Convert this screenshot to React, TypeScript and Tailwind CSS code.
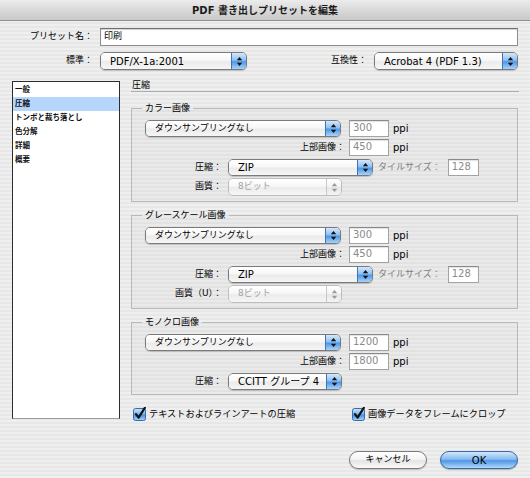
import React from "react";

const ROOT_FONT = "font-[family-name:'DejaVu_Sans','Noto_Sans_CJK_JP',sans-serif]";

function Arrows({ disabled }: { disabled?: boolean }) {
  const c = disabled ? "#9a9a9a" : "#111";
  return (
    <svg width="7" height="11" viewBox="0 0 7 11">
      <path d="M0.8 4.3 L3.5 1 L6.2 4.3 Z" fill={c} />
      <path d="M0.8 6.7 L3.5 10 L6.2 6.7 Z" fill={c} />
    </svg>
  );
}

function Popup({
  className,
  label,
  disabled,
  textClass,
}: {
  className: string;
  label: string;
  disabled?: boolean;
  textClass: string;
}) {
  return (
    <div
      className={`flex shrink-0 items-stretch overflow-hidden rounded-[5px] border ${
        disabled ? "border-[#bdbdbd]" : "border-[#7a7a7a] shadow-[0_1px_1px_rgba(0,0,0,0.18)]"
      } ${className}`}
    >
      <div
        className={`flex flex-1 items-center pl-[9px] bg-[linear-gradient(180deg,#ffffff_0%,#f7f7f7_45%,#ebebeb_55%,#f6f6f6_100%)] ${
          disabled ? "text-[#a0a0a0]" : "text-black"
        } ${textClass}`}
      >
        {label}
      </div>
      <div
        className={`flex w-[15px] items-center justify-center border-l ${
          disabled
            ? "border-[#c8c8c8] bg-[linear-gradient(180deg,#ffffff_0%,#f4f4f4_50%,#e6e6e6_51%,#f4f4f4_100%)]"
            : "border-[#3f74b8] bg-[linear-gradient(180deg,#d6e8fb_0%,#8ec0f2_45%,#4d98e6_55%,#a8d3fa_100%)]"
        }`}
      >
        <Arrows disabled={disabled} />
      </div>
    </div>
  );
}

function Field({ className, value, dark }: { className: string; value: string; dark?: boolean }) {
  return (
    <div
      className={`flex h-[17px] shrink-0 items-start border border-[#a3a3a3] border-t-[#8a8a8a] bg-white pl-[3px] text-[10px] leading-[14px] shadow-[inset_0_1px_1px_rgba(0,0,0,0.12)] ${
        dark ? "text-black" : "text-[#8a8a8a]"
      } ${className}`}
    >
      {value}
    </div>
  );
}

function Check() {
  return (
    <svg width="14" height="14" viewBox="0 0 14 14" className="shrink-0">
      <defs>
        <linearGradient id="cb" x1="0" y1="0" x2="0" y2="1">
          <stop offset="0" stopColor="#cfe5fb" />
          <stop offset="0.45" stopColor="#7db6ef" />
          <stop offset="0.55" stopColor="#4a93e2" />
          <stop offset="1" stopColor="#a8d4fa" />
        </linearGradient>
      </defs>
      <rect x="0.5" y="1.5" width="12" height="12" rx="2" fill="url(#cb)" stroke="#3a6aa8" />
      <path d="M3 7.2 L5.6 10.6 L11.8 0.8" fill="none" stroke="#111" strokeWidth="2.2" strokeLinecap="round" strokeLinejoin="round" />
    </svg>
  );
}

function Label({ className, children }: { className: string; children: React.ReactNode }) {
  return <span className={`shrink-0 text-right text-[9px] ${className}`}>{children}</span>;
}

export default function App() {
  return (
    <div
      className={`${ROOT_FONT} flex h-[478px] w-[530px] flex-col overflow-hidden bg-[repeating-linear-gradient(180deg,#efefef_0px,#efefef_2px,#e7e7e7_2px,#e7e7e7_4px)] text-black`}
    >
      {/* title bar */}
      <div className="flex h-[21px] shrink-0 items-center justify-center border-b border-[#909090] bg-[linear-gradient(180deg,#ececec_0%,#d9d9d9_50%,#c9c9c9_100%)] text-[10px] font-bold text-[#1c1c1c]">
        PDF 書き出しプリセットを編集
      </div>

      {/* preset name */}
      <div className="mt-[7px] flex h-[18px] items-center">
        <Label className="w-[93px]">プリセット名：</Label>
        <div className="ml-[7px] mr-[12px] flex h-[18px] flex-1 items-center border border-[#8e8e8e] border-t-[#6f6f6f] bg-white pl-[3px] text-[9px] shadow-[inset_0_1px_1px_rgba(0,0,0,0.18)]">
          印刷
        </div>
      </div>

      {/* standard / compatibility */}
      <div className="mt-[6px] flex h-[18px] items-center">
        <Label className="w-[93px]">標準：</Label>
        <Popup className="ml-[7px] h-[18px] w-[147px]" label="PDF/X-1a:2001" textClass="text-[10px]" />
        <Label className="flex-1 pr-[7px]">互換性：</Label>
        <Popup className="mr-[12px] h-[18px] w-[144px]" label="Acrobat 4 (PDF 1.3)" textClass="text-[10px]" />
      </div>

      {/* lower area */}
      <div className="mt-[11px] flex">
        {/* side list */}
        <div className="ml-[12px] flex h-[338px] w-[108px] shrink-0 flex-col border border-[#2c2c2c] border-b-[#9a9a9a] bg-white pt-[1px]">
          {["一般", "圧縮", "トンボと裁ち落とし", "色分解", "詳細", "概要"].map((t, i) => (
            <div
              key={t}
              className={`flex h-[14px] items-center pl-[2px] text-[7.5px] font-semibold text-[#111] ${
                i === 1 ? "bg-[#b7d6fb]" : ""
              }`}
            >
              {t}
            </div>
          ))}
        </div>

        {/* right panel */}
        <div className="ml-[11px] flex w-[388px] flex-col">
          <div className="h-[11px] border-b border-[#ababab] pl-[1px] text-[9px] leading-[9px]">圧縮</div>

          {/* color images */}
          <fieldset className="mt-[10px] mr-[1px] border border-[#b9b9b9] bg-black/[0.02] pb-[5px] pt-[6px]">
            <legend className="ml-[10px] px-[3px] text-[9px] leading-[12px]">カラー画像</legend>
            <div className="flex h-[17px] items-center">
              <Popup className="ml-[13px] h-[17px] w-[196px]" label="ダウンサンプリングなし" textClass="text-[9px]" />
              <Field className="ml-[8px] w-[40px]" value="300" />
              <span className="ml-[4px] text-[10px]">ppi</span>
            </div>
            <div className="mt-[2px] flex h-[17px] items-center">
              <Label className="w-[213px]">上部画像：</Label>
              <Field className="ml-[4px] w-[40px]" value="450" />
              <span className="ml-[4px] text-[10px]">ppi</span>
            </div>
            <div className="mt-[3px] flex h-[17px] items-center">
              <Label className="w-[90px]">圧縮：</Label>
              <Popup className="ml-[6px] h-[17px] w-[145px]" label="ZIP" textClass="text-[10px]" />
              <span className="ml-[5px] text-[9px] text-[#7d7d7d]">タイルサイズ：</span>
              <Field className="ml-[7px] w-[31px]" value="128" />
            </div>
            <div className="mt-[2px] flex h-[18px] items-center">
              <Label className="w-[90px]">画質：</Label>
              <Popup disabled className="ml-[6px] h-[18px] w-[114px]" label="8ビット" textClass="text-[9px]" />
            </div>
          </fieldset>

          {/* grayscale images */}
          <fieldset className="mt-[7px] mr-[1px] border border-[#b9b9b9] bg-black/[0.02] pb-[5px] pt-[6px]">
            <legend className="ml-[10px] px-[3px] text-[9px] leading-[12px]">グレースケール画像</legend>
            <div className="flex h-[17px] items-center">
              <Popup className="ml-[13px] h-[17px] w-[196px]" label="ダウンサンプリングなし" textClass="text-[9px]" />
              <Field className="ml-[8px] w-[40px]" value="300" />
              <span className="ml-[4px] text-[10px]">ppi</span>
            </div>
            <div className="mt-[2px] flex h-[17px] items-center">
              <Label className="w-[213px]">上部画像：</Label>
              <Field className="ml-[4px] w-[40px]" value="450" />
              <span className="ml-[4px] text-[10px]">ppi</span>
            </div>
            <div className="mt-[3px] flex h-[17px] items-center">
              <Label className="w-[90px]">圧縮：</Label>
              <Popup className="ml-[6px] h-[17px] w-[145px]" label="ZIP" textClass="text-[10px]" />
              <span className="ml-[5px] text-[9px] text-[#7d7d7d]">タイルサイズ：</span>
              <Field className="ml-[7px] w-[31px]" value="128" />
            </div>
            <div className="mt-[2px] flex h-[18px] items-center">
              <Label className="w-[90px]">画質（U）：</Label>
              <Popup disabled className="ml-[6px] h-[18px] w-[114px]" label="8ビット" textClass="text-[9px]" />
            </div>
          </fieldset>

          {/* monochrome images */}
          <fieldset className="mt-[7px] mr-[1px] border border-[#b9b9b9] bg-black/[0.02] pb-[4px] pt-[6px]">
            <legend className="ml-[10px] px-[3px] text-[9px] leading-[12px]">モノクロ画像</legend>
            <div className="flex h-[17px] items-center">
              <Popup className="ml-[13px] h-[17px] w-[196px]" label="ダウンサンプリングなし" textClass="text-[9px]" />
              <Field className="ml-[8px] w-[40px]" value="1200" />
              <span className="ml-[4px] text-[10px]">ppi</span>
            </div>
            <div className="mt-[2px] flex h-[17px] items-center">
              <Label className="w-[213px]">上部画像：</Label>
              <Field className="ml-[4px] w-[40px]" value="1800" />
              <span className="ml-[4px] text-[10px]">ppi</span>
            </div>
            <div className="mt-[3px] flex h-[17px] items-center">
              <Label className="w-[90px]">圧縮：</Label>
              <Popup className="ml-[6px] h-[17px] w-[114px]" label="CCITT グループ 4" textClass="text-[10px]" />
            </div>
          </fieldset>

          {/* checkboxes */}
          <div className="mt-[12px] flex h-[14px] items-center">
            <div className="flex w-[221px] items-center pl-[2px]">
              <Check />
              <span className="ml-[2px] text-[9.2px]">テキストおよびラインアートの圧縮</span>
            </div>
            <Check />
            <span className="ml-[2px] text-[9.2px]">画像データをフレームにクロップ</span>
          </div>

          {/* buttons */}
          <div className="mt-[30px] flex justify-end gap-[13px] pr-[1px]">
            <div className="flex h-[18px] w-[78px] items-center justify-center rounded-full border border-[#7a7a7a] bg-[linear-gradient(180deg,#ffffff_0%,#f4f4f4_45%,#e4e4e4_55%,#fbfbfb_100%)] text-[9px] shadow-[0_1px_1px_rgba(0,0,0,0.2)]">
              キャンセル
            </div>
            <div className="flex h-[18px] w-[78px] items-center justify-center rounded-full border border-[#3a68a6] bg-[linear-gradient(180deg,#d3e7fb_0%,#86bbf0_45%,#4f97e4_55%,#b2d9fb_100%)] text-[10px] shadow-[0_1px_1px_rgba(0,0,0,0.25)]">
              OK
            </div>
          </div>
        </div>
      </div>
    </div>
  );
}
